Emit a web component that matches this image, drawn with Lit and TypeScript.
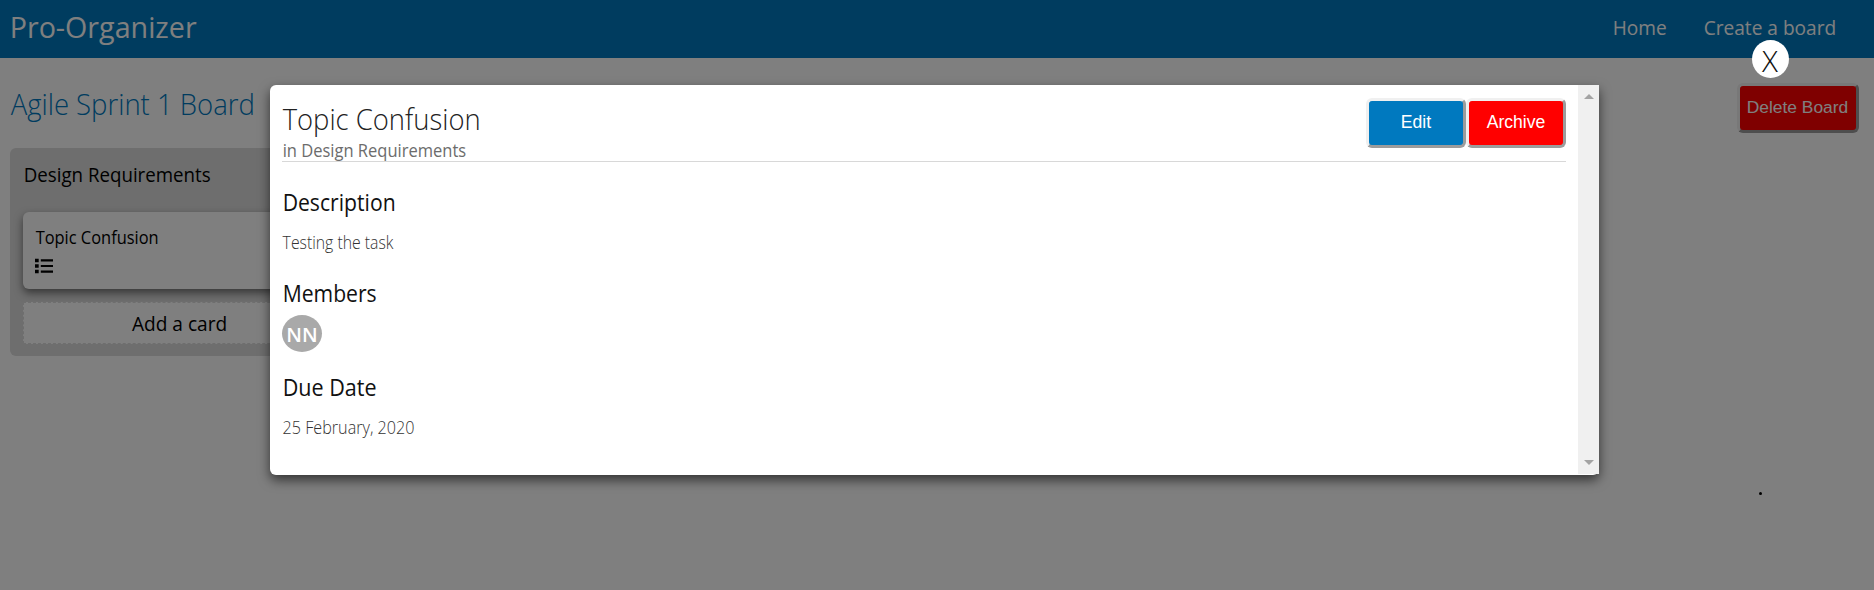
import { LitElement, html, css } from "lit";

class AppRoot extends LitElement {
  static styles = css`
    :host {
      display: block;
      position: relative;
      height: 590px;
      overflow: hidden;
      background: #fff;
      color: #000;
      font-family: "Open Sans", "Noto Sans", sans-serif;
    }
    * { box-sizing: border-box; margin: 0; }
    .fit { display: inline-block; padding-left: 0.7px; white-space: nowrap; transform-origin: 0 50%; }
    .bar {
      display: flex;
      justify-content: space-between;
      height: 58px;
      padding: 0 45px 0 9px;
      background: #0079bf;
      color: #fff;
      line-height: 54px;
    }
    .logo { font-size: 28.8px; }
    .logo .fit { transform: scaleX(0.995); }
    .nav { display: flex; font-size: 20px; line-height: 56px; }
    .nav .home { width: 91px; }
    .nav .create { width: 126px; }
    .nav .fit { transform: scaleX(0.955); }
    .board { padding: 25px 15px 0 10px; }
    .board-head { display: flex; justify-content: space-between; height: 50px; }
    .board-title { font-size: 29px; line-height: 41px; font-weight: 300; color: #0079bf; }
    .board-title .fit { transform: scaleX(0.948); }
    .btn {
      width: 100px;
      height: 50px;
      padding: 0 0 1px;
      border: 3px solid;
      border-color: #f0f0f0 #9c9c9c #9c9c9c #f0f0f0;
      border-radius: 6px;
      background: #0079bf;
      color: #fff;
      font: 17.6px "Liberation Sans", Arial, sans-serif;
    }
    .danger { background: #f00; }
    .delete { width: 122px; font-size: 17.4px; padding: 0 1px 2px 0; }
    .column {
      width: 338px;
      margin-top: 15px;
      padding: 0 13px 12px;
      border-radius: 6px;
      background: #dcdcdc;
    }
    .column-title { padding-top: 2px; font-size: 20px; font-weight: 400; line-height: 50px; }
    .column-title .fit { transform: scaleX(0.936); }
    .card {
      height: 77px;
      margin-top: 12px;
      padding: 12px;
      border-radius: 6px;
      background: #fff;
      box-shadow: 0 4px 8px rgba(0, 0, 0, 0.5);
    }
    .card-title { font-size: 18px; line-height: 27px; }
    .card-title .fit { transform: scaleX(0.912); }
    .list { display: block; margin-top: 7px; }
    .add {
      height: 42px;
      margin-top: 13px;
      border: 1px dashed #dcdcdc;
      background: #fff;
      font-size: 20px;
      line-height: 42px;
      text-align: center;
    }
    .add .fit { transform: scaleX(0.955); transform-origin: 50% 50%; }
    .overlay { position: absolute; inset: 0; background: rgba(0, 0, 0, 0.5); }
    .modal {
      position: absolute;
      left: 270px;
      top: 85px;
      width: 1329px;
      height: 390px;
      display: flex;
      border-radius: 6px 0 6px 6px;
      background: #fff;
      box-shadow: 0 5px 12px rgba(0, 0, 0, 0.6);
    }
    .content { flex: 1; padding: 13px 12px 0; }
    .head { display: flex; height: 64px; border-bottom: 1px solid #d8d8d8; }
    .titles { flex: 1; padding-top: 2px; }
    .title { font-size: 30px; font-weight: 300; line-height: 37px; color: #222; }
    .title .fit { transform: scaleX(0.914); }
    .sub { margin-top: 2px; font-size: 18px; line-height: 22px; color: #6c6c6c; }
    .sub .fit { transform: scaleX(0.917); }
    .label { height: 30px; margin-top: 25px; font-size: 23px; font-weight: 400; line-height: 31px; color: #111; }
    .label .fit { transform: scaleX(0.92); }
    .label.members { margin-top: 24px; }
    .label.due { margin-top: 20px; }
    .label.due .fit { transform: scaleX(0.937); }
    .value { margin-top: 13px; font-size: 18px; font-weight: 300; line-height: 24px; color: #333; }
    .value .fit { transform: scaleX(0.877); }
    .value.date .fit { transform: scaleX(0.897); }
    .avatar {
      width: 40px;
      height: 37px;
      margin-top: 7px;
      border-radius: 50%;
      background: #a9a9a9;
      color: #fff;
      font-size: 20px;
      font-weight: 600;
      line-height: 40px;
      text-align: center;
    }
    .scroll {
      display: flex;
      flex-direction: column;
      justify-content: space-between;
      align-items: center;
      width: 21px;
      height: 389px;
      padding: 9px 0;
      background: #f0f0f0;
    }
    .close {
      position: absolute;
      left: 1752px;
      top: 40px;
      width: 37px;
      height: 38px;
      border-radius: 50%;
      background: #fff;
      color: #111;
      font-size: 29.5px;
      font-weight: 300;
      line-height: 41px;
      text-align: center;
    }
    .close .fit { padding: 0; transform: translateX(-0.5px); }
    .dot { position: absolute; left: 1759px; top: 492px; width: 3px; height: 3px; border-radius: 50%; background: #000; }
  `;

  private fit(text: string) {
    return html`<span class="fit">${text}</span>`;
  }

  render() {
    return html`
      <header class="bar">
        <div class="logo">${this.fit("Pro-Organizer")}</div>
        <nav class="nav">
          <div class="home">${this.fit("Home")}</div>
          <div class="create">${this.fit("Create a board")}</div>
        </nav>
      </header>
      <main class="board">
        <div class="board-head">
          <h1 class="board-title">${this.fit("Agile Sprint 1 Board")}</h1>
          <button class="btn danger delete">Delete Board</button>
        </div>
        <section class="column">
          <h2 class="column-title">${this.fit("Design Requirements")}</h2>
          <div class="card">
            <div class="card-title">${this.fit("Topic Confusion")}</div>
            <svg class="list" width="18" height="16" viewBox="0 0 18 16">
              <path d="M0 .7h3.7v3.5H0zM0 6.2h3.7v3.5H0zM0 11.8h3.7v3.5H0zM5.8 1.2H18v2.2H5.8zM5.8 6.9H18v2.2H5.8zM5.8 12.5H18v2.2H5.8z" />
            </svg>
          </div>
          <div class="add">${this.fit("Add a card")}</div>
        </section>
      </main>
      <div class="overlay">
        <div class="close">${this.fit("X")}</div>
        <section class="modal">
          <div class="content">
            <div class="head">
              <div class="titles">
                <h2 class="title">${this.fit("Topic Confusion")}</h2>
                <div class="sub">${this.fit("in Design Requirements")}</div>
              </div>
              <button class="btn">Edit</button>
              <button class="btn danger">Archive</button>
            </div>
            <h3 class="label">${this.fit("Description")}</h3>
            <p class="value">${this.fit("Testing the task")}</p>
            <h3 class="label members">${this.fit("Members")}</h3>
            <div class="avatar">NN</div>
            <h3 class="label due">${this.fit("Due Date")}</h3>
            <p class="value date">${this.fit("25 February, 2020")}</p>
          </div>
          <div class="scroll">
            <svg width="10" height="5"><path d="M0 5 5 0l5 5z" fill="#a3a3a3" /></svg>
            <svg width="10" height="5"><path d="M0 0h10L5 5z" fill="#a3a3a3" /></svg>
          </div>
        </section>
        <div class="dot"></div>
      </div>
    `;
  }
}
customElements.define("app-root", AppRoot);
